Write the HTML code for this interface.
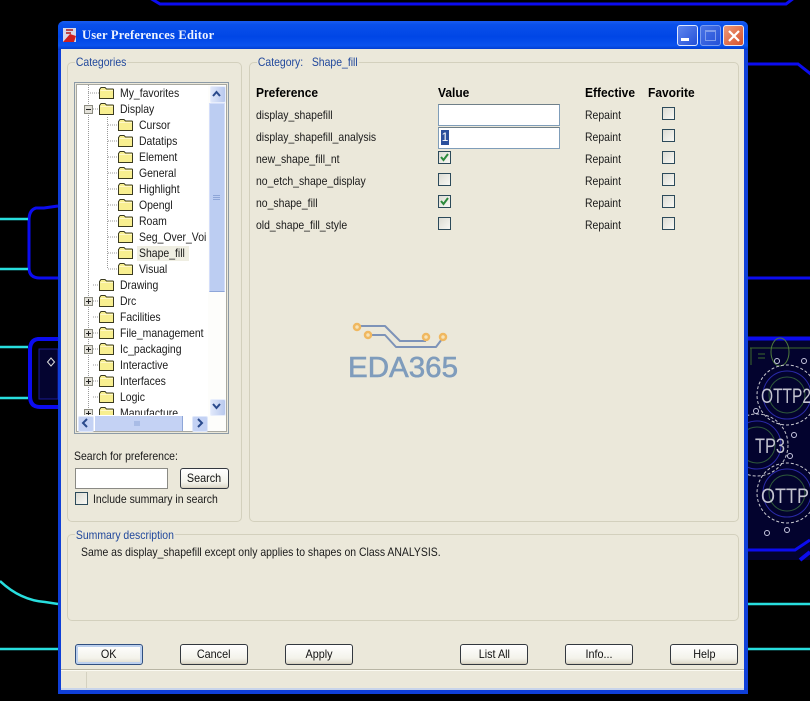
<!DOCTYPE html>
<html>
<head>
<meta charset="utf-8">
<style>
html,body{margin:0;padding:0;background:#000;}
#page{position:relative;width:810px;height:701px;overflow:hidden;background:#000;font-family:"Liberation Sans",sans-serif;font-size:12px;color:#1a1a1a;}
.a{position:absolute;}
.t{position:absolute;white-space:nowrap;line-height:14px;height:14px;transform:scaleX(.87);transform-origin:0 50%;}
.b{font-weight:bold;color:#000;font-size:12.5px;transform:scaleX(.96);}
.grp{position:absolute;border:1px solid #d3d0bd;border-radius:5px;box-sizing:border-box;}
.lab{position:absolute;white-space:nowrap;background:#ebe8da;color:#21489c;line-height:14px;padding:0 1px;transform:scaleX(.87);transform-origin:0 50%;}
.btn{position:absolute;box-sizing:border-box;height:21px;border:1px solid #33383f;border-radius:3px;background:linear-gradient(#fff,#f3f2ea 70%,#dcd8c8);text-align:center;line-height:18px;color:#111;box-shadow:inset 0 -1px 0 #d6d0c0;}
.btn span{display:inline-block;transform:scaleX(.9);}
.chk{position:absolute;box-sizing:border-box;width:13px;height:13px;border:1px solid #2c4a5a;background:linear-gradient(135deg,#dcdcd4,#f8f8f4);}
.in{position:absolute;box-sizing:border-box;border:1px solid #7f9db9;background:#fff;}
svg{position:absolute;left:0;top:0;}
</style>
</head>
<body>
<div id="page">
<svg width="810" height="701" viewBox="0 0 810 701">
 <g fill="none" stroke="#0c0cf0">
  <path d="M150 -2 L160 4 L786 4 L794 -2" stroke-width="3"/>
  <path d="M747 64 L798 64 L812 75" stroke-width="3"/>
  <path d="M58 206 L44 208 L36 208 Q29 210 29 220 L29 268 Q29 278 40 278 L58 278" stroke-width="3"/>
  <path d="M58 339 L38 339 Q30 340 30 350 L30 396 Q30 407 40 407 L58 407" stroke-width="4"/>
  <path d="M747 278 L810 278" stroke-width="3"/>
  <path d="M747 338 L810 338" stroke-width="3"/>
 </g>
 <rect x="39" y="349" width="19" height="50" fill="#040430" stroke="#1a1a9a"/>
 <path d="M51 358 L54.500 362 L51 366 L47.500 362 Z" fill="none" stroke="#ddd"/>
 <g stroke="#28dede" stroke-width="2.500" fill="none">
  <path d="M0 219 L28 219"/><path d="M0 269 L28 269"/>
  <path d="M0 347 L28 347"/><path d="M0 398 L28 398"/>
  <path d="M0 649 L58 649"/>
  <path d="M0 581 Q20 600 45 602 L58 604"/>
  <path d="M747 604 L810 604"/><path d="M747 649 L810 649"/>
 </g>
 <rect x="747" y="340" width="63" height="220" fill="#03032e"/>
 <g fill="none">
  <path d="M747 339 L810 339" stroke="#0c0cf0" stroke-width="3"/>
  <path d="M750 348 L810 348 M751 348 L751 365 M758 354 L765 354 M758 358 L765 358" stroke="#3d6a2c"/>
  <ellipse cx="780" cy="352" rx="9" ry="14" stroke="#4f7a3c"/>
  <g stroke="#c8c8d0" stroke-dasharray="3 2">
   <circle cx="787" cy="395" r="30"/><circle cx="757" cy="445" r="31"/><circle cx="787" cy="493" r="30"/>
  </g>
  <g stroke="#2a2aa8"><circle cx="787" cy="395" r="24"/><circle cx="757" cy="445" r="24"/><circle cx="787" cy="493" r="24"/></g>
  <g stroke="#2f5a3a"><circle cx="787" cy="395" r="18"/><circle cx="757" cy="445" r="18"/><circle cx="787" cy="493" r="18"/></g>
  <g stroke="#c8c8e0">
   <circle cx="777" cy="361" r="2.500"/><circle cx="804" cy="361" r="2.500"/><circle cx="756" cy="411" r="2.500"/>
   <circle cx="794" cy="435" r="2.500"/><circle cx="790" cy="456" r="2.500"/><circle cx="767" cy="533" r="2.500"/><circle cx="787" cy="530" r="2.500"/>
  </g>
  <path d="M747 550 L795 550 L810 540" stroke="#0c0cf0" stroke-width="3"/>
  <path d="M800 560 L810 552" stroke="#0c0cf0" stroke-width="4"/>
 </g>
 <g fill="#c4c4d0" font-family="Liberation Sans, sans-serif" font-size="21" lengthAdjust="spacingAndGlyphs">
  <text x="761" y="403" textLength="50" lengthAdjust="spacingAndGlyphs">OTTP2</text>
  <text x="755" y="453" textLength="30" lengthAdjust="spacingAndGlyphs">TP3</text>
  <text x="761" y="503" textLength="48" lengthAdjust="spacingAndGlyphs">OTTP</text>
 </g>
</svg>

<!-- window frame -->
<div class="a" style="left:58px;top:21px;width:690px;height:673px;background:#0f3fd8;border-radius:6px 6px 0 0;"></div>
<div class="a" style="left:58px;top:21px;width:690px;height:29px;border-radius:6px 6px 0 0;background:linear-gradient(#1a5cf0,#0a50ea 12%,#0046e6 55%,#0a52ee 85%,#0038c8);"></div>
<div class="a" style="left:61px;top:49px;width:683px;height:641px;background:#ebe8da;"></div>

<svg width="810" height="701" viewBox="0 0 810 701">
 <rect x="63" y="28" width="13" height="14" fill="#d8d8e8"/>
 <path d="M63 42 L70 34 L76 36 L74 42 Z" fill="#d02020"/>
 <path d="M66 30 h7 M66 33 h5" stroke="#b01818" stroke-width="1.500"/>
</svg>
<div class="a" style="left:82px;top:28px;white-space:nowrap;line-height:14px;color:#eef3ff;font-family:'Liberation Serif',serif;font-weight:bold;font-size:12.5px;letter-spacing:.2px;">User Preferences Editor</div>

<!-- title buttons -->
<div class="a" style="left:677px;top:25px;width:21px;height:21px;box-sizing:border-box;border:1px solid #dfe8ff;border-radius:3px;background:linear-gradient(135deg,#5f86ee,#2450d8);"></div>
<div class="a" style="left:681px;top:38px;width:8px;height:3px;background:#fff;"></div>
<div class="a" style="left:700px;top:25px;width:21px;height:21px;box-sizing:border-box;border:1px solid #7a9cf0;border-radius:3px;background:linear-gradient(135deg,#4a74e6,#2450d8);"></div>
<div class="a" style="left:705px;top:30px;width:11px;height:11px;box-sizing:border-box;border:1px solid #7f9cec;border-top-width:2px;"></div>
<div class="a" style="left:723px;top:25px;width:21px;height:21px;box-sizing:border-box;border:1px solid #e8e8f0;border-radius:3px;background:linear-gradient(135deg,#ec9a78,#d8502c);"></div>
<svg width="810" height="701" viewBox="0 0 810 701"><path d="M729 31 L739 41 M739 31 L729 41" stroke="#fff" stroke-width="2.200"/></svg>

<!-- groups -->
<div class="grp" style="left:67px;top:62px;width:175px;height:460px;"></div>
<div class="lab" style="left:75px;top:55px;">Categories</div>
<div class="grp" style="left:249px;top:62px;width:490px;height:460px;"></div>
<div class="lab" style="left:257px;top:55px;">Category:&nbsp;&nbsp;&nbsp;Shape_fill</div>
<div class="grp" style="left:67px;top:534px;width:672px;height:87px;"></div>
<div class="lab" style="left:75px;top:528px;">Summary description</div>

<!-- tree -->
<div class="a" style="left:74px;top:82px;width:155px;height:352px;box-sizing:border-box;border:1px solid #8c9aa6;background:#ebe8da;"></div>
<div class="a" style="left:76px;top:84px;width:151px;height:348px;box-sizing:border-box;border:1px solid #a8a8a0;background:#fff;"></div>
<svg width="810" height="701" viewBox="0 0 810 701">
 <defs>
  <g id="f"><path d="M.5 3.500 L2 1.500 H6 L7.500 3 H14 L14.500 3.500 V12.500 H.5 Z" fill="#f8ef90" stroke="#3a3a20"/><path d="M1.500 4.500 H14" stroke="#fff8c8"/></g>
  <g id="p"><rect x=".5" y=".5" width="8" height="8" fill="#e4e2da" stroke="#8a8a80"/><path d="M2 4.500 H7 M4.500 2 V7" stroke="#222"/></g>
  <g id="m"><rect x=".5" y=".5" width="8" height="8" fill="#e4e2da" stroke="#8a8a80"/><path d="M2 4.500 H7" stroke="#222"/></g>
 </defs>
 <clipPath id="tc"><rect x="77" y="85" width="131" height="330"/></clipPath>
 <g clip-path="url(#tc)">
  <g stroke="#999" stroke-dasharray="1 1" fill="none">
   <path d="M88.500 85 V415"/>
   <path d="M107.500 117 V269"/>
   <path d="M88 93 H99 M93 109 H99 M93 285 H99 M93 301 H99 M93 317 H99 M93 333 H99 M93 349 H99 M93 365 H99 M93 381 H99 M93 397 H99"/>
   <path d="M108 125 H118 M108 141 H118 M108 157 H118 M108 173 H118 M108 189 H118 M108 205 H118 M108 221 H118 M108 237 H118 M108 253 H118 M108 269 H118"/>
  </g>
  <use href="#f" x="99" y="86"/><use href="#f" x="99" y="102"/>
  <use href="#f" x="118" y="118"/><use href="#f" x="118" y="134"/><use href="#f" x="118" y="150"/><use href="#f" x="118" y="166"/><use href="#f" x="118" y="182"/><use href="#f" x="118" y="198"/><use href="#f" x="118" y="214"/><use href="#f" x="118" y="230"/><use href="#f" x="118" y="246"/><use href="#f" x="118" y="262"/>
  <use href="#f" x="99" y="278"/><use href="#f" x="99" y="294"/><use href="#f" x="99" y="310"/><use href="#f" x="99" y="326"/><use href="#f" x="99" y="342"/><use href="#f" x="99" y="358"/><use href="#f" x="99" y="374"/><use href="#f" x="99" y="390"/><use href="#f" x="99" y="406"/>
  <use href="#m" x="84" y="105"/><use href="#p" x="84" y="297"/><use href="#p" x="84" y="329"/><use href="#p" x="84" y="345"/><use href="#p" x="84" y="377"/><use href="#p" x="84" y="409"/>
  <rect x="137" y="246" width="52" height="15" fill="#efeee2"/>
 </g>
</svg>
<div class="a" style="left:77px;top:85px;width:131px;height:330px;overflow:hidden;">
 <div class="t" style="left:43px;top:1px;">My_favorites</div>
 <div class="t" style="left:43px;top:17px;">Display</div>
 <div class="t" style="left:62px;top:33px;">Cursor</div>
 <div class="t" style="left:62px;top:49px;">Datatips</div>
 <div class="t" style="left:62px;top:65px;">Element</div>
 <div class="t" style="left:62px;top:81px;">General</div>
 <div class="t" style="left:62px;top:97px;">Highlight</div>
 <div class="t" style="left:62px;top:113px;">Opengl</div>
 <div class="t" style="left:62px;top:129px;">Roam</div>
 <div class="t" style="left:62px;top:145px;">Seg_Over_Voi</div>
 <div class="t" style="left:62px;top:161px;">Shape_fill</div>
 <div class="t" style="left:62px;top:177px;">Visual</div>
 <div class="t" style="left:43px;top:193px;">Drawing</div>
 <div class="t" style="left:43px;top:209px;">Drc</div>
 <div class="t" style="left:43px;top:225px;">Facilities</div>
 <div class="t" style="left:43px;top:241px;">File_management</div>
 <div class="t" style="left:43px;top:257px;">Ic_packaging</div>
 <div class="t" style="left:43px;top:273px;">Interactive</div>
 <div class="t" style="left:43px;top:289px;">Interfaces</div>
 <div class="t" style="left:43px;top:305px;">Logic</div>
 <div class="t" style="left:43px;top:321px;">Manufacture</div>
</div>
<!-- scrollbars -->
<div class="a" style="left:208px;top:85px;width:18px;height:346px;background:#fdfdfb;"></div>
<div class="a" style="left:210px;top:86px;width:14px;height:15px;background:linear-gradient(90deg,#e0e8fa,#b8c8ee);border:1px solid #e8eefc;border-radius:2px;"></div>
<div class="a" style="left:209px;top:103px;width:16px;height:189px;box-sizing:border-box;background:#bccdf2;border:1px solid #d4defa;border-bottom-color:#8ea6d8;"></div>
<div class="a" style="left:210px;top:399px;width:14px;height:15px;background:linear-gradient(90deg,#e0e8fa,#b8c8ee);border:1px solid #e8eefc;border-radius:2px;"></div>
<div class="a" style="left:78px;top:416px;width:14px;height:14px;background:#c4d2f4;border:1px solid #e0e8fa;border-radius:2px;"></div>
<div class="a" style="left:95px;top:416px;width:88px;height:15px;background:#c4d2f4;border-right:1px solid #8ea6d8;box-sizing:border-box;"></div>
<div class="a" style="left:192px;top:416px;width:14px;height:14px;background:#c4d2f4;border:1px solid #e0e8fa;border-radius:2px;"></div>
<svg width="810" height="701" viewBox="0 0 810 701">
 <g fill="none" stroke="#2a4a8c" stroke-width="2">
  <path d="M213 96 L216.500 92 L220 96"/><path d="M213 404 L216.500 408 L220 404"/>
  <path d="M87 419 L83 423 L87 427"/><path d="M198 419 L202 423 L198 427"/>
 </g>
 <path d="M213 195.500 h7 M213 197.500 h7 M213 199.500 h7 M135 421 v5 M137 421 v5 M139 421 v5" stroke="#8ea6d8"/>
</svg>

<!-- search -->
<div class="t" style="left:74px;top:449px;">Search for preference:</div>
<div class="a" style="left:75px;top:468px;width:93px;height:21px;box-sizing:border-box;border:1px solid #8a8a84;background:#fff;"></div>
<div class="btn" style="left:180px;top:468px;width:49px;"><span>Search</span></div>
<div class="chk" style="left:75px;top:492px;"></div>
<div class="t" style="left:93px;top:492px;">Include summary in search</div>

<!-- header row -->
<div class="t b" style="left:256px;top:86px;">Preference</div>
<div class="t b" style="left:438px;top:86px;">Value</div>
<div class="t b" style="left:585px;top:86px;">Effective</div>
<div class="t b" style="left:648px;top:86px;">Favorite</div>

<div class="t" style="left:256px;top:108px;">display_shapefill</div>
<div class="t" style="left:256px;top:130px;">display_shapefill_analysis</div>
<div class="t" style="left:256px;top:152px;">new_shape_fill_nt</div>
<div class="t" style="left:256px;top:174px;">no_etch_shape_display</div>
<div class="t" style="left:256px;top:196px;">no_shape_fill</div>
<div class="t" style="left:256px;top:218px;">old_shape_fill_style</div>

<div class="in" style="left:438px;top:104px;width:122px;height:22px;border-top-color:#6f7f88;"></div>
<div class="in" style="left:438px;top:127px;width:122px;height:22px;border-top-color:#6f7f88;"></div>
<div class="a" style="left:441px;top:130px;width:8px;height:15px;background:#2a4f9c;color:#fff;text-align:center;line-height:15px;">1</div>

<div class="chk" style="left:438px;top:151px;"></div>
<div class="chk" style="left:438px;top:173px;"></div>
<div class="chk" style="left:438px;top:195px;"></div>
<div class="chk" style="left:438px;top:217px;"></div>
<svg width="810" height="701" viewBox="0 0 810 701">
 <path d="M441 157 L443.500 160 L448 154" fill="none" stroke="#2c8a3c" stroke-width="2"/>
 <path d="M441 201 L443.500 204 L448 198" fill="none" stroke="#2c8a3c" stroke-width="2"/>
</svg>

<div class="t" style="left:585px;top:108px;">Repaint</div>
<div class="t" style="left:585px;top:130px;">Repaint</div>
<div class="t" style="left:585px;top:152px;">Repaint</div>
<div class="t" style="left:585px;top:174px;">Repaint</div>
<div class="t" style="left:585px;top:196px;">Repaint</div>
<div class="t" style="left:585px;top:218px;">Repaint</div>

<div class="chk" style="left:662px;top:107px;"></div>
<div class="chk" style="left:662px;top:129px;"></div>
<div class="chk" style="left:662px;top:151px;"></div>
<div class="chk" style="left:662px;top:173px;"></div>
<div class="chk" style="left:662px;top:195px;"></div>
<div class="chk" style="left:662px;top:217px;"></div>

<!-- watermark -->
<svg width="810" height="701" viewBox="0 0 810 701">
 <g fill="none" stroke-linejoin="round">
  <path d="M358 326 H385 L400 341 H426" stroke="#7d93b8" stroke-width="2"/>
  <path d="M368 335 H385 L396 347 H436 L442 339" stroke="#7d93b8" stroke-width="2"/>
  <g stroke="#f0b860" stroke-width="2.500" fill="#f6e3b8">
   <circle cx="357" cy="327" r="3"/><circle cx="368" cy="335" r="3"/><circle cx="426" cy="337" r="3"/><circle cx="443" cy="337" r="3"/>
  </g>
 </g>
 <text x="348" y="377" font-family="Liberation Sans, sans-serif" font-size="29" fill="#7f9cbc" stroke="#7f9cbc" stroke-width=".6" textLength="110" lengthAdjust="spacingAndGlyphs">EDA365</text>
</svg>

<!-- summary -->
<div class="t" style="left:81px;top:545px;">Same as display_shapefill except only applies to shapes on Class ANALYSIS.</div>

<!-- buttons -->
<div class="btn" style="left:75px;top:644px;width:68px;border-color:#2f4f80;box-shadow:inset 0 0 0 2px #bcd0ee;"><span>OK</span></div>
<div class="btn" style="left:180px;top:644px;width:68px;"><span>Cancel</span></div>
<div class="btn" style="left:285px;top:644px;width:68px;"><span>Apply</span></div>
<div class="btn" style="left:460px;top:644px;width:68px;"><span>List All</span></div>
<div class="btn" style="left:565px;top:644px;width:68px;"><span>Info...</span></div>
<div class="btn" style="left:670px;top:644px;width:68px;"><span>Help</span></div>

<!-- status bar -->
<div class="a" style="left:61px;top:669px;width:683px;height:1px;background:#b8b5a4;"></div>
<div class="a" style="left:61px;top:670px;width:683px;height:1px;background:#fbfaf2;"></div>
<div class="a" style="left:86px;top:672px;width:1px;height:18px;background:#d4d1c0;"></div>
<div class="a" style="left:61px;top:688px;width:683px;height:2px;background:#c8d4ea;"></div>
</div>
</body>
</html>
